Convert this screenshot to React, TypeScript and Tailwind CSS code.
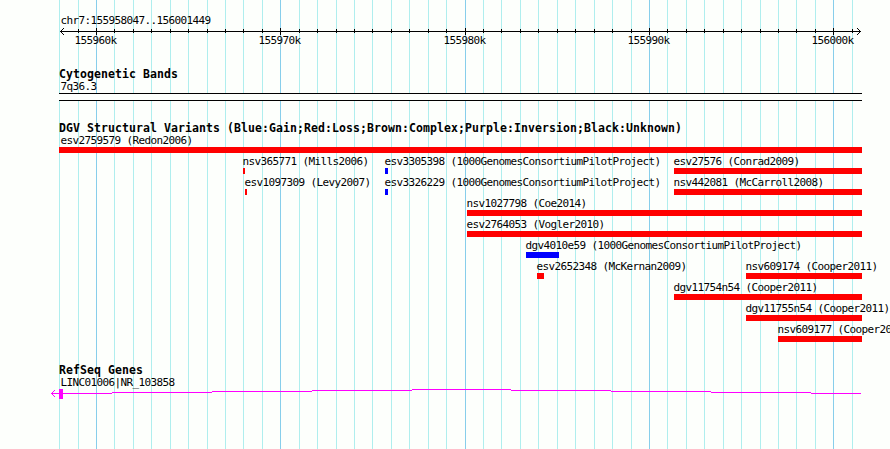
import type { ReactNode } from "react"

type Feature = {
  name: string
  start: number
  end: number
  gain?: boolean
  labelOffset?: number
}

const MINOR_LINES = [
  59, 78, 114, 133, 151, 170, 188, 207, 225, 243, 262, 299, 317, 336, 354, 372, 391, 409, 428, 446, 483, 501, 520, 538,
  557, 575, 594, 612, 631, 667, 686, 704, 723, 741, 760, 778, 796, 815, 852,
]
const MAJOR_LINES = [96, 280, 465, 649, 833]
const RULER_LABELS = ["155960k", "155970k", "155980k", "155990k", "156000k"]

const VARIANT_ROWS: Feature[][] = [
  [{ name: "esv2759579 (Redon2006)", start: 59, end: 862, labelOffset: 1 }],
  [
    { name: "nsv365771 (Mills2006)", start: 243, end: 245 },
    { name: "esv3305398 (1000GenomesConsortiumPilotProject)", start: 385, end: 388, gain: true },
    { name: "esv27576 (Conrad2009)", start: 674, end: 862 },
  ],
  [
    { name: "esv1097309 (Levy2007)", start: 245, end: 247 },
    { name: "esv3326229 (1000GenomesConsortiumPilotProject)", start: 385, end: 388, gain: true },
    { name: "nsv442081 (McCarroll2008)", start: 674, end: 862 },
  ],
  [{ name: "nsv1027798 (Coe2014)", start: 467, end: 862 }],
  [{ name: "esv2764053 (Vogler2010)", start: 467, end: 862 }],
  [{ name: "dgv4010e59 (1000GenomesConsortiumPilotProject)", start: 526, end: 559, gain: true }],
  [
    { name: "esv2652348 (McKernan2009)", start: 537, end: 544 },
    { name: "nsv609174 (Cooper2011)", start: 746, end: 862 },
  ],
  [{ name: "dgv11754n54 (Cooper2011)", start: 674, end: 862 }],
  [{ name: "dgv11755n54 (Cooper2011)", start: 746, end: 862 }],
  [{ name: "nsv609177 (Cooper2011)", start: 778, end: 862 }],
]

// [x1, x2, y] steps of the intron line
const INTRON_STEPS = [
  [52, 112, 5],
  [112, 212, 4],
  [212, 312, 3],
  [312, 412, 2],
  [412, 511, 1],
  [511, 611, 2],
  [611, 711, 3],
  [711, 811, 4],
  [811, 861, 5],
]

function GridLines() {
  return (
    <svg className="absolute inset-0" width="890" height="449" shapeRendering="crispEdges">
      {MINOR_LINES.map((x) => (
        <rect key={x} x={x} y="0" width="1" height="449" fill="#afeeee" />
      ))}
      {MAJOR_LINES.map((x) => (
        <rect key={x} x={x} y="0" width="1" height="449" fill="#87ceeb" />
      ))}
    </svg>
  )
}

function Label({ children }: { children: ReactNode }) {
  return <div className="h-3 whitespace-pre pl-[0.5px] text-[11px] leading-3 tracking-[-0.622px]">{children}</div>
}

function TrackTitle({ children }: { children: ReactNode }) {
  return (
    <h2 className="ml-[59px] h-3 whitespace-pre text-[11.5px] font-bold leading-3 tracking-[0.077px]">{children}</h2>
  )
}

function Ruler() {
  return (
    <section className="h-[68px] pt-[15px]">
      <div className="ml-[60px]">
        <Label>chr7:155958047..156001449</Label>
      </div>
      <svg className="block" width="890" height="8" shapeRendering="crispEdges">
        <rect x="60" y="4" width="801" height="1" />
        {MINOR_LINES.slice(1).map((x) => (
          <rect key={x} x={x} y="2" width="1" height="4" />
        ))}
        {MAJOR_LINES.map((x) => (
          <rect key={x} x={x} y="1" width="1" height="7" />
        ))}
        <path d="M61 3h1v-1h1v-1h1v1h-1v1h-1v1h-1zM61 5h1v1h1v1h1v1h-1v-1h-1v-1h-1z" />
        <path d="M860 3h-1v-1h-1v-1h-1v1h1v1h1v1h1zM860 5h-1v1h-1v1h-1v1h1v-1h1v-1h1z" />
      </svg>
      <div className="flex">
        {RULER_LABELS.map((label, i) => (
          <div key={label} className="w-0" style={{ marginLeft: MAJOR_LINES[i] - (i ? MAJOR_LINES[i - 1] : 22) }}>
            <Label>{label}</Label>
          </div>
        ))}
      </div>
    </section>
  )
}

function VariantRow({ features }: { features: Feature[] }) {
  return (
    <div className="flex h-[21px]">
      {features.map((f, i) => (
        <div key={f.name} className="w-0" style={{ marginLeft: f.start - (i ? features[i - 1].start : 0) }}>
          <div style={{ marginLeft: f.labelOffset ?? -1 }}>
            <Label>{f.name}</Label>
          </div>
          <div className={f.gain ? "h-1.5 bg-[#0000ff]" : "h-1.5 bg-[#ff0000]"} style={{ width: f.end - f.start }} />
        </div>
      ))}
    </div>
  )
}

export default function App() {
  return (
    <main className="relative h-[449px] w-[890px] overflow-hidden bg-[#fdfffc] font-['DejaVu_Sans_Mono',monospace] text-black">
      <GridLines />
      <div className="relative">
        <Ruler />

        {/* Cytogenetic bands */}
        <section className="h-[54px]">
          <TrackTitle>Cytogenetic Bands</TrackTitle>
          <div className="ml-[60px] mt-px">
            <Label>7q36.3</Label>
          </div>
          <div className="ml-[59px] h-2 w-[803px] border-y border-black bg-[#fdfffc]" />
        </section>

        {/* Structural variants */}
        <section className="h-[242px]">
          <TrackTitle>DGV Structural Variants (Blue:Gain;Red:Loss;Brown:Complex;Purple:Inversion;Black:Unknown)</TrackTitle>
          <div className="mt-px">
            {VARIANT_ROWS.map((features) => (
              <VariantRow key={features[0].name} features={features} />
            ))}
          </div>
        </section>

        {/* RefSeq genes */}
        <section>
          <TrackTitle>RefSeq Genes</TrackTitle>
          <div className="ml-[60px] mt-px">
            <Label>LINC01006|NR_103858</Label>
          </div>
          <svg className="-mt-px block" width="890" height="12" fill="#ff00ff" shapeRendering="crispEdges">
            {INTRON_STEPS.map(([x1, x2, y]) => (
              <rect key={x1} x={x1} y={y} width={x2 - x1} height="1" />
            ))}
            <rect x="59" y="1" width="4" height="10" />
            <path d="M51 5h1v-1h1v-1h1v-1h1v1h-1v1h-1v1h-1v1h1v1h1v1h1v1h-1v-1h-1v-1h-1v-1h-1z" />
          </svg>
        </section>
      </div>
    </main>
  )
}
